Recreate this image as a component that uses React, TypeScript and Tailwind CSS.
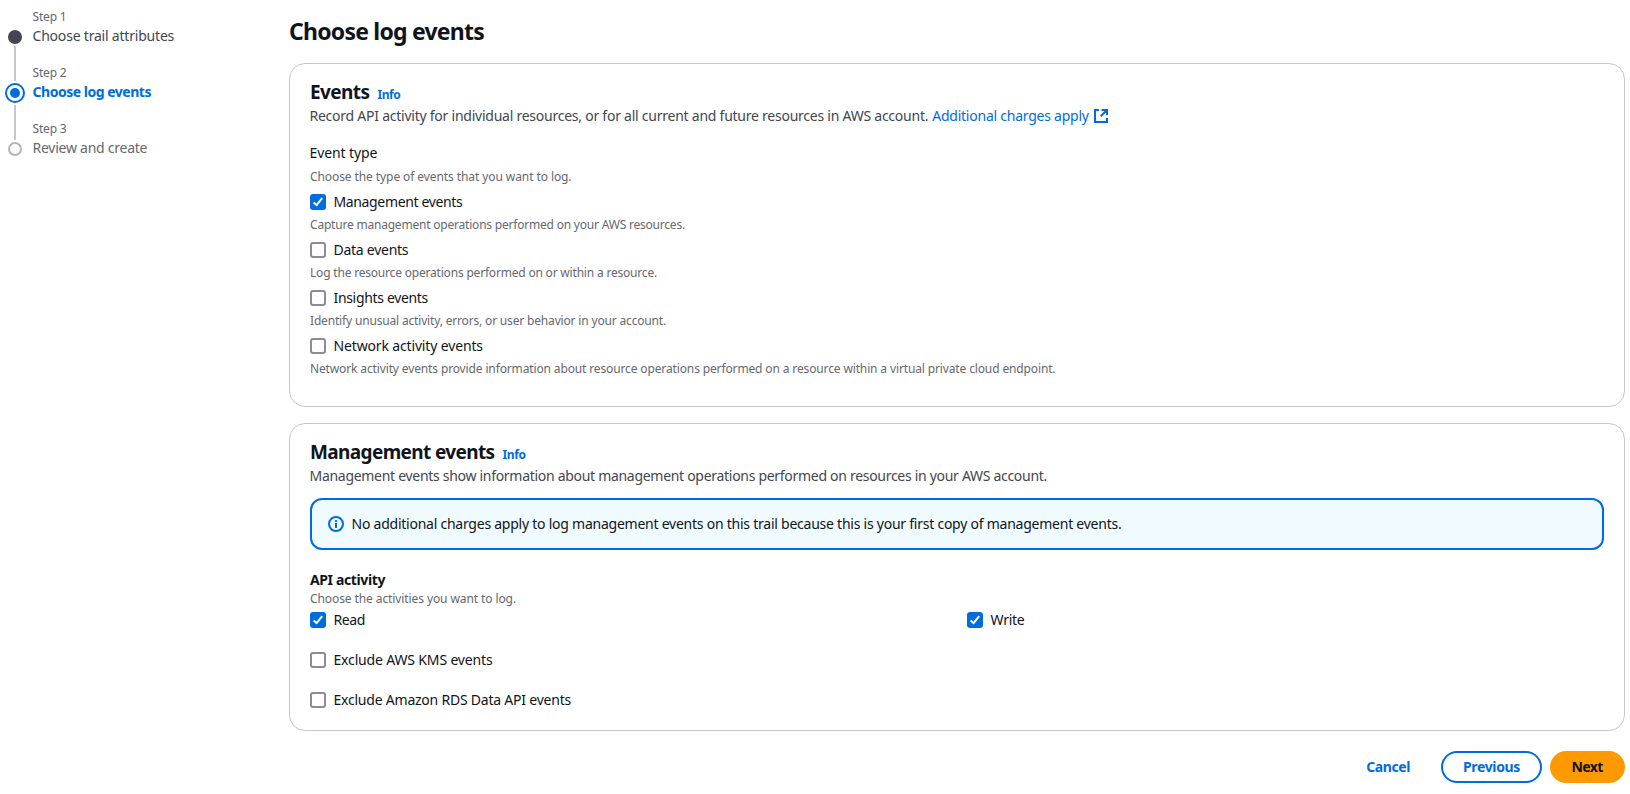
import type { ReactNode } from "react";

function Checkbox({ checked = false }: { checked?: boolean }) {
  return checked ? (
    <span className="flex size-4 shrink-0 items-center justify-center rounded-[3px] bg-[#006ce0]">
      <svg viewBox="0 0 16 16" className="size-4" fill="none" stroke="#fff" strokeWidth="2">
        <path d="M3.6 8.4 6.6 11.1 12.2 4.2" />
      </svg>
    </span>
  ) : (
    <span className="size-4 shrink-0 rounded-[3px] border-2 border-[#8c8c94] bg-white" />
  );
}

function Option({ checked, className, children }: { checked?: boolean; className: string; children: ReactNode }) {
  return (
    <label className="flex h-5 items-center gap-[7.5px]">
      <Checkbox checked={checked} />
      <span className={className}>{children}</span>
    </label>
  );
}

function Hint({ className, children }: { className: string; children: ReactNode }) {
  return (
    <div className={`h-4 text-xs leading-[18px] text-[#656871] ${className}`}>
      <p>{children}</p>
    </div>
  );
}

function Stepper() {
  return (
    <nav className="flex w-[289px] shrink-0">
      <div className="flex w-[30px] flex-col items-center gap-0.5 pt-[30px]">
        <span className="size-3.5 rounded-full bg-[#424650]" />
        <span className="h-[35px] w-0.5 bg-[#c6c6cd]" />
        <span className="flex size-5 items-center justify-center rounded-full border-2 border-[#006ce0]">
          <span className="size-2.5 rounded-full bg-[#006ce0]" />
        </span>
        <span className="h-[35px] w-0.5 bg-[#c6c6cd]" />
        <span className="size-3.5 rounded-full border-2 border-[#b4b4bb]" />
      </div>
      <ol className="flex flex-col gap-[18px] pt-2 pl-[2.5px]">
        <li className="flex flex-col gap-0.5">
          <Hint className="tracking-[-0.17px]">Step 1</Hint>
          <span className="tracking-[-0.2px] text-[#424650]">Choose trail attributes</span>
        </li>
        <li className="flex flex-col gap-0.5">
          <Hint className="tracking-[-0.17px]">Step 2</Hint>
          <span className="font-bold tracking-[-0.48px] text-[#006ce0]">Choose log events</span>
        </li>
        <li className="flex flex-col gap-0.5">
          <Hint className="tracking-[-0.17px]">Step 3</Hint>
          <span className="tracking-[-0.25px] text-[#656871]">Review and create</span>
        </li>
      </ol>
    </nav>
  );
}

function CardHeader({ title, className }: { title: string; className: string }) {
  return (
    <div className="flex items-baseline gap-2">
      <h2 className={`text-[19px] leading-6 font-bold ${className}`}>{title}</h2>
      <a className="text-xs leading-4 font-bold tracking-[-0.4px] text-[#006ce0]">Info</a>
    </div>
  );
}

export default function App() {
  return (
    <div className="flex h-[794px] w-[1630px] overflow-hidden bg-white font-['Noto_Sans',sans-serif] text-sm leading-5 whitespace-nowrap text-[#0f141a]">
      <Stepper />
      <main className="flex w-[1336px] flex-col pt-4">
        <h1 className="text-[23px] leading-[30px] font-bold tracking-[-0.77px]">Choose log events</h1>

        <section className="mt-[17px] h-[344px] rounded-2xl border border-[#c6c6cd] px-5 pt-4">
          <CardHeader title="Events" className="tracking-[-0.6px]" />
          <p className="mt-0.5 flex items-center text-[#424650]">
            <span className="-ml-[0.5px] tracking-[-0.243px]">
              Record API activity for individual resources, or for all current and future resources in AWS account.
            </span>
            <a className="ml-1 flex items-center gap-1 tracking-[-0.238px] text-[#006ce0]">
              Additional charges apply
              <svg viewBox="0 0 16 16" className="size-4" fill="none" stroke="currentColor" strokeWidth="2">
                <path d="M6 2H2v12h12v-4M8.5 2H14v5M14 2 7.7 8.3" />
              </svg>
            </a>
          </p>
          <p className="mt-[17px] -ml-[0.5px] tracking-[-0.1px]">Event type</p>
          <Hint className="mt-[5px] mb-2 tracking-[-0.087px]">Choose the type of events that you want to log.</Hint>
          <div className="flex flex-col gap-2">
            <div className="flex flex-col gap-1">
              <Option checked className="tracking-[-0.36px]">Management events</Option>
              <Hint className="tracking-[-0.206px]">Capture management operations performed on your AWS resources.</Hint>
            </div>
            <div className="flex flex-col gap-1">
              <Option className="tracking-[-0.26px]">Data events</Option>
              <Hint className="tracking-[-0.193px]">Log the resource operations performed on or within a resource.</Hint>
            </div>
            <div className="flex flex-col gap-1">
              <Option className="tracking-[-0.33px]">Insights events</Option>
              <Hint className="tracking-[-0.169px]">Identify unusual activity, errors, or user behavior in your account.</Hint>
            </div>
            <div className="flex flex-col gap-1">
              <Option className="tracking-[-0.15px]">Network activity events</Option>
              <Hint className="tracking-[-0.133px]">
                Network activity events provide information about resource operations performed on a resource within a virtual private cloud endpoint.
              </Hint>
            </div>
          </div>
        </section>

        <section className="mt-4 h-[308px] rounded-2xl border border-[#c6c6cd] px-5 pt-4">
          <CardHeader title="Management events" className="tracking-[-0.62px]" />
          <p className="mt-0.5 -ml-[0.5px] tracking-[-0.295px] text-[#424650]">
            Management events show information about management operations performed on resources in your AWS account.
          </p>
          <div className="mt-3 flex h-[52px] items-center gap-[7.5px] rounded-xl border-2 border-[#006ce0] bg-[#f0fbff] px-4">
            <svg viewBox="0 0 16 16" className="size-4 shrink-0" fill="none" stroke="#006ce0" strokeWidth="2">
              <circle cx="8" cy="8" r="7" />
              <path d="M8 4v1.8M8 7v5" />
            </svg>
            <span className="tracking-[-0.241px]">
              No additional charges apply to log management events on this trail because this is your first copy of management events.
            </span>
          </div>
          <p className="mt-5 font-bold tracking-[-0.382px]">API activity</p>
          <Hint className="tracking-[-0.094px]">Choose the activities you want to log.</Hint>
          <div className="mt-1 grid grid-cols-2 gap-x-5">
            <Option checked className="tracking-[-0.4px]">Read</Option>
            <Option checked className="tracking-[-0.245px]">Write</Option>
          </div>
          <div className="mt-5 flex flex-col gap-5">
            <Option className="tracking-[-0.16px]">Exclude AWS KMS events</Option>
            <Option className="tracking-[-0.22px]">Exclude Amazon RDS Data API events</Option>
          </div>
        </section>

        <div className="mt-5 flex justify-end font-bold">
          <button className="mr-[31px] h-8 tracking-[-0.42px] text-[#006ce0]">Cancel</button>
          <button className="mr-2 h-8 w-[101px] rounded-full border-2 border-[#006ce0] tracking-[-0.351px] text-[#006ce0]">
            Previous
          </button>
          <button className="h-8 w-[75px] rounded-full bg-[#ff9900] pr-px tracking-[-0.6px]">Next</button>
        </div>
      </main>
    </div>
  );
}
